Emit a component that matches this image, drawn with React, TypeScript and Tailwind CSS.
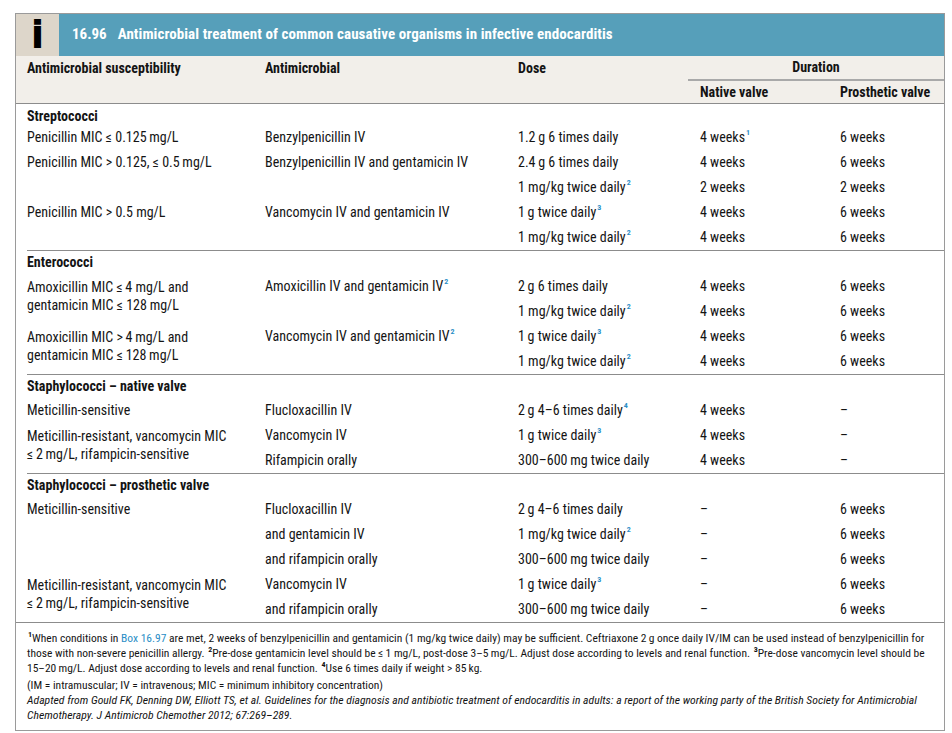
import React from "react";

const Sup = ({ n, blue = true }: { n: string; blue?: boolean }) => (
  <span
    className={
      "relative top-[-5px] ml-[1px] text-[8px] font-bold leading-none " +
      (blue ? "text-[#2a8ec6]" : "text-[#111]")
    }
  >
    {n}
  </span>
);

type Cell = React.ReactNode | null | undefined;
type Row = { c: Cell[]; span?: number };

type Section = { title: string; first?: boolean; rows: Row[] };

const T = "\u2009";

const sections: Section[] = [
  {
    title: "Streptococci",
    first: true,
    rows: [
      { c: [`Penicillin MIC ≤ 0.125${T}mg/L`, "Benzylpenicillin IV", `1.2${T}g 6 times daily`, <>4 weeks<Sup n="1" /></>, "6 weeks"] },
      { c: [`Penicillin MIC > 0.125, ≤ 0.5${T}mg/L`, "Benzylpenicillin IV and gentamicin IV", `2.4${T}g 6 times daily`, "4 weeks", "6 weeks"] },
      { c: ["", "", <>1 mg/kg twice daily<Sup n="2" /></>, "2 weeks", "2 weeks"] },
      { c: ["Penicillin MIC > 0.5 mg/L", "Vancomycin IV and gentamicin IV", <>1{T}g twice daily<Sup n="3" /></>, "4 weeks", "6 weeks"] },
      { c: ["", "", <>1 mg/kg twice daily<Sup n="2" /></>, "4 weeks", "6 weeks"] },
    ],
  },
  {
    title: "Enterococci",
    rows: [
      {
        span: 2,
        c: [
          <>Amoxicillin MIC ≤{T}4 mg/L and<br />gentamicin MIC ≤ 128{T}mg/L</>,
          <>Amoxicillin IV and gentamicin IV<Sup n="2" /></>,
          `2${T}g 6 times daily`,
          "4 weeks",
          "6 weeks",
        ],
      },
      { c: [null, "", <>1 mg/kg twice daily<Sup n="2" /></>, "4 weeks", "6 weeks"] },
      {
        span: 2,
        c: [
          <>Amoxicillin MIC &gt;{T}4{T}mg/L and<br />gentamicin MIC ≤{T}128{T}mg/L</>,
          <>Vancomycin IV and gentamicin IV<Sup n="2" /></>,
          <>1{T}g twice daily<Sup n="3" /></>,
          "4 weeks",
          "6 weeks",
        ],
      },
      { c: [null, "", <>1 mg/kg twice daily<Sup n="2" /></>, "4 weeks", "6 weeks"] },
    ],
  },
  {
    title: "Staphylococci – native valve",
    rows: [
      { c: ["Meticillin-sensitive", "Flucloxacillin IV", <>2{T}g 4–6 times daily<Sup n="4" /></>, "4 weeks", "–"] },
      {
        span: 2,
        c: [
          <>Meticillin-resistant, vancomycin MIC<br />≤{T}2{T}mg/L, rifampicin-sensitive</>,
          "Vancomycin IV",
          <>1{T}g twice daily<Sup n="3" /></>,
          "4 weeks",
          "–",
        ],
      },
      { c: [null, "Rifampicin orally", `300–600${T}mg twice daily`, "4 weeks", "–"] },
    ],
  },
  {
    title: "Staphylococci – prosthetic valve",
    rows: [
      { c: ["Meticillin-sensitive", "Flucloxacillin IV", `2${T}g 4–6 times daily`, "–", "6 weeks"] },
      { c: ["", "and gentamicin IV", <>1 mg/kg twice daily<Sup n="2" /></>, "–", "6 weeks"] },
      { c: ["", "and rifampicin orally", `300–600${T}mg twice daily`, "–", "6 weeks"] },
      {
        span: 2,
        c: [
          <>Meticillin-resistant, vancomycin MIC<br />≤{T}2{T}mg/L, rifampicin-sensitive</>,
          "Vancomycin IV",
          <>1{T}g twice daily<Sup n="3" /></>,
          "–",
          "6 weeks",
        ],
      },
      { c: [null, "and rifampicin orally", `300–600${T}mg twice daily`, "–", "6 weeks"] },
    ],
  },
];

function SectionBlock({ s }: { s: Section }) {
  const cells: React.ReactNode[] = [];
  s.rows.forEach((r, ri) => {
    r.c.forEach((cell, ci) => {
      if (cell === null) return;
      if (ci === 0 && r.span === 2) {
        cells.push(
          <div key={`${ri}-${ci}`} className="row-span-2 pt-[4px] leading-[18px]">
            {cell}
          </div>
        );
      } else {
        cells.push(
          <div key={`${ri}-${ci}`} className="flex h-[25px] items-center whitespace-nowrap">
            {cell}
          </div>
        );
      }
    });
  });
  return (
    <div className={s.first ? "pt-[3px]" : "border-t border-[#8c8c8c]"}>
      <div className={"flex items-center font-bold " + (s.first ? "h-[18px]" : "h-[23px]")}>{s.title}</div>
      <div className="grid grid-cols-[238px_253px_182px_140px_1fr] auto-rows-[25px]">{cells}</div>
    </div>
  );
}

export default function App() {
  return (
    <div className="min-h-[733px] bg-white pl-[15px] pt-[13px] font-['Roboto',sans-serif] font-stretch-condensed text-[14px] text-[#141414]">
      <div className="w-[930px] border border-[#9a9a9a]">
        {/* title bar */}
        <div className="flex h-[42px]">
          <div className="flex w-[43px] items-center justify-center bg-[#ddd6ca]">
            <span className="font-['Liberation_Sans',sans-serif] text-[36px] font-black leading-none text-black [font-stretch:normal] [-webkit-text-stroke:2px_black]">i</span>
          </div>
          <div className="flex flex-1 items-center bg-[#569fba] pl-[13px] pb-[1px] text-[15px] font-bold text-white">
            <span>16.96</span>
            <span className="ml-[11px] tracking-[0.08px]">Antimicrobial treatment of common causative organisms in infective endocarditis</span>
          </div>
        </div>
        {/* header */}
        <div className="border-b border-[#8c8c8c] bg-[#f2efea] pl-[11px] font-bold">
          <div className="grid grid-cols-[238px_253px_182px_140px_1fr] grid-rows-[25px_22px]">
            <div className="flex items-center">Antimicrobial susceptibility</div>
            <div className="flex items-center">Antimicrobial</div>
            <div className="flex items-center">Dose</div>
            <div className="col-span-2 ml-[-12px] flex items-center justify-center border-b-2 border-[#a9a9a9]">Duration</div>
            <div />
            <div />
            <div />
            <div className="flex items-center">Native valve</div>
            <div className="flex items-center">Prosthetic valve</div>
          </div>
        </div>
        {/* body */}
        <div className="pl-[11px]">
          {sections.map((s) => (
            <SectionBlock key={s.title} s={s} />
          ))}
        </div>
        {/* footnotes */}
        <div className="border-t border-[#8c8c8c] pl-[11px] pt-[8px] pb-[7px] text-[11.5px] leading-[15px]">
          <div className="whitespace-nowrap">
            <Sup n="1" blue={false} />When conditions in <span className="text-[#2a8ec6]">Box 16.97</span> are met, 2 weeks of benzylpenicillin and gentamicin (1 mg/kg twice daily) may be sufficient. Ceftriaxone 2{T}g once daily IV/IM can be used instead of benzylpenicillin for
          </div>
          <div className="whitespace-nowrap">
            those with non-severe penicillin allergy. <Sup n="2" blue={false} />Pre-dose gentamicin level should be ≤{T}1 mg/L, post-dose 3–5{T}mg/L. Adjust dose according to levels and renal function. <Sup n="3" blue={false} />Pre-dose vancomycin level should be
          </div>
          <div className="whitespace-nowrap">
            15–20{T}mg/L. Adjust dose according to levels and renal function. <Sup n="4" blue={false} />Use 6 times daily if weight &gt; 85{T}kg.
          </div>
          <div className="mt-[2px] whitespace-nowrap">(IM = intramuscular; IV = intravenous; MIC = minimum inhibitory concentration)</div>
          <div className="whitespace-nowrap text-[11.7px] italic">
            Adapted from Gould FK, Denning DW, Elliott TS, et al. Guidelines for the diagnosis and antibiotic treatment of endocarditis in adults: a report of the working party of the British Society for Antimicrobial
          </div>
          <div className="whitespace-nowrap text-[11.7px] italic">Chemotherapy. J Antimicrob Chemother 2012; 67:269–289.</div>
        </div>
      </div>
    </div>
  );
}
